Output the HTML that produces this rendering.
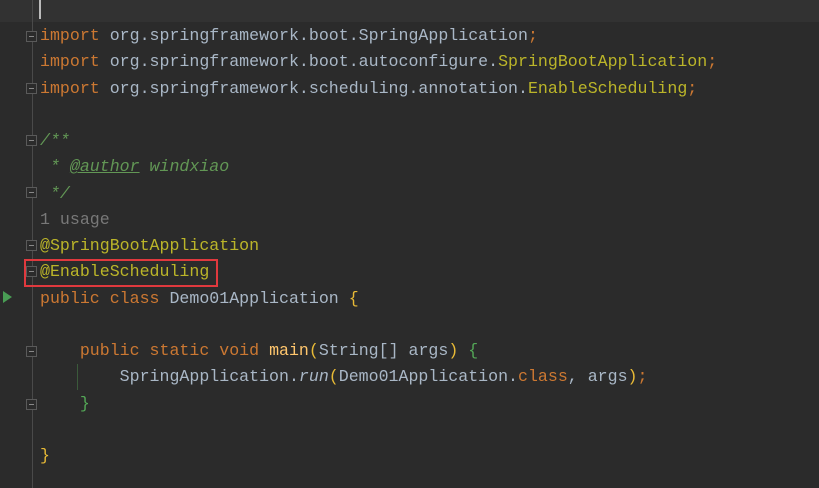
<!DOCTYPE html>
<html><head><style>
body{margin:0;width:819px;height:488px;background:#2b2b2b;overflow:hidden;position:relative;font-family:"Liberation Mono","DejaVu Sans Mono",monospace;}
.top{position:absolute;left:0;top:0;width:819px;height:22px;background:#323232;}
.cur{position:absolute;left:39px;top:0;width:2px;height:19px;background:#bbbbbb;}
.gline{position:absolute;left:32px;top:0;width:1px;height:488px;background:#4a4a4a;}
pre{position:absolute;left:40px;top:23px;margin:0;font-size:16.6px;line-height:26.25px;color:#a9b7c6;font-family:inherit;}
.k{color:#cc7832}.a{color:#bbb529}.c{color:#629755;font-style:italic}.t{color:#629755;text-decoration:underline;font-style:italic}
.u{color:#787878}.f{color:#ffc66d}.y{color:#e8ba36}.g{color:#54a857}.i{font-style:italic}
.fold{position:absolute;left:26px;width:11px;height:11px;border:1px solid #5a5a5a;box-sizing:border-box;background:#2b2b2b;}
.fold:after{content:"";position:absolute;left:2px;top:4px;width:5px;height:1px;background:#888;}
.box{position:absolute;left:24px;top:259px;width:194px;height:28px;border:2px solid #e0393e;box-sizing:border-box;}
.run{position:absolute;left:3px;top:291px;width:0;height:0;border-left:9px solid #499c54;border-top:6px solid transparent;border-bottom:6px solid transparent;}
.ig{position:absolute;left:77px;top:364px;width:1px;height:26px;background:#3b5a3b;}
</style></head><body>
<div class="top"></div><div class="cur"></div><div class="gline"></div>
<div class="fold" style="top:31px"></div><div class="fold" style="top:83px"></div>
<div class="fold" style="top:135px"></div><div class="fold" style="top:187px"></div>
<div class="fold" style="top:240px"></div><div class="fold" style="top:266px"></div>
<div class="fold" style="top:346px"></div><div class="fold" style="top:399px"></div>
<div class="run"></div><div class="ig"></div>
<pre><span class="k">import</span> org.springframework.boot.SpringApplication<span class="k">;</span>
<span class="k">import</span> org.springframework.boot.autoconfigure.<span class="a">SpringBootApplication</span><span class="k">;</span>
<span class="k">import</span> org.springframework.scheduling.annotation.<span class="a">EnableScheduling</span><span class="k">;</span>

<span class="c">/**</span>
<span class="c"> * </span><span class="t">@author</span><span class="c"> windxiao</span>
<span class="c"> */</span>
<span class="u">1 usage</span>
<span class="a">@SpringBootApplication</span>
<span class="a">@EnableScheduling</span>
<span class="k">public class</span> Demo01Application <span class="y">{</span>

    <span class="k">public static void</span> <span class="f">main</span><span class="y">(</span>String[] args<span class="y">)</span> <span class="g">{</span>
        SpringApplication.<span class="i">run</span><span class="y">(</span>Demo01Application.<span class="k">class</span>, args<span class="y">)</span><span class="k">;</span>
    <span class="g">}</span>

<span class="y">}</span></pre>
<div class="box"></div>
</body></html>
